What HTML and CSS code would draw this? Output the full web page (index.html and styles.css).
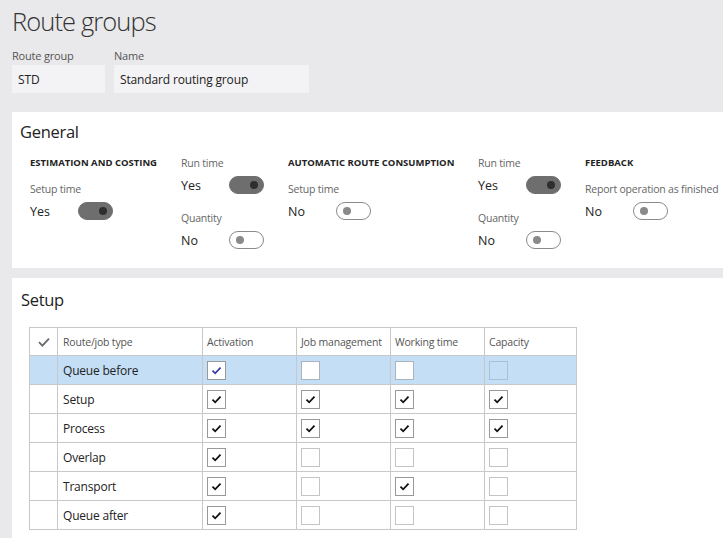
FILE: index.html
```html
<!DOCTYPE html>
<html lang="en">
<head>
<meta charset="utf-8">
<title>Route groups</title>
<link rel="stylesheet" href="styles.css">
</head>
<body>
<div class="page">
  <h1 class="title">Route groups</h1>
  <div class="ident">
    <div class="ifield">
      <div class="ilabel">Route group</div>
      <div class="input input-std">STD</div>
    </div>
    <div class="ifield">
      <div class="ilabel">Name</div>
      <div class="input input-name">Standard routing group</div>
    </div>
  </div>

  <section class="panel general">
    <h2 class="panel-title">General</h2>
    <div class="groups">
      <div class="grp grp-est">
        <div class="ghead">ESTIMATION AND COSTING</div>
        <div class="fld">
          <div class="flabel">Setup time</div>
          <div class="frow"><span class="fval">Yes</span><span class="toggle on"></span></div>
        </div>
      </div>
      <div class="grp grp-run">
        <div class="fld">
          <div class="flabel">Run time</div>
          <div class="frow"><span class="fval">Yes</span><span class="toggle on"></span></div>
        </div>
        <div class="fld">
          <div class="flabel">Quantity</div>
          <div class="frow"><span class="fval">No</span><span class="toggle"></span></div>
        </div>
      </div>
      <div class="grp grp-auto">
        <div class="ghead">AUTOMATIC ROUTE CONSUMPTION</div>
        <div class="fld">
          <div class="flabel">Setup time</div>
          <div class="frow"><span class="fval">No</span><span class="toggle"></span></div>
        </div>
      </div>
      <div class="grp grp-run">
        <div class="fld">
          <div class="flabel">Run time</div>
          <div class="frow"><span class="fval">Yes</span><span class="toggle on"></span></div>
        </div>
        <div class="fld">
          <div class="flabel">Quantity</div>
          <div class="frow"><span class="fval">No</span><span class="toggle"></span></div>
        </div>
      </div>
      <div class="grp grp-feed">
        <div class="ghead">FEEDBACK</div>
        <div class="fld">
          <div class="flabel">Report operation as finished</div>
          <div class="frow"><span class="fval">No</span><span class="toggle"></span></div>
        </div>
      </div>
    </div>
  </section>

  <section class="panel setup">
    <h2 class="panel-title">Setup</h2>
    <table class="grid">
      <colgroup>
        <col class="c-mark"><col class="c-type"><col class="c-flag"><col class="c-flag"><col class="c-flag"><col class="c-cap">
      </colgroup>
      <thead>
        <tr>
          <th class="markcell"><svg class="hmark" width="12" height="10" viewBox="0 0 12 10"><path d="M1 5.2 L4.4 8.6 L11 1.6" fill="none" stroke="#6a6a6a" stroke-width="1.8"/></svg></th>
          <th>Route/job type</th>
          <th>Activation</th>
          <th>Job management</th>
          <th>Working time</th>
          <th>Capacity</th>
        </tr>
      </thead>
      <tbody>
        <tr class="selected">
          <td></td><td class="tname">Queue before</td>
          <td><span class="cb on blue"><svg viewBox="0 0 19 19"><path d="M5 9.6 L8 12.6 L14 6.2"/></svg></span></td>
          <td><span class="cb sel-empty"></span></td>
          <td><span class="cb sel-empty"></span></td>
          <td><span class="cb disabled"></span></td>
        </tr>
        <tr>
          <td></td><td class="tname">Setup</td>
          <td><span class="cb on"><svg viewBox="0 0 19 19"><path d="M5 9.6 L8 12.6 L14 6.2"/></svg></span></td>
          <td><span class="cb on"><svg viewBox="0 0 19 19"><path d="M5 9.6 L8 12.6 L14 6.2"/></svg></span></td>
          <td><span class="cb on"><svg viewBox="0 0 19 19"><path d="M5 9.6 L8 12.6 L14 6.2"/></svg></span></td>
          <td><span class="cb on"><svg viewBox="0 0 19 19"><path d="M5 9.6 L8 12.6 L14 6.2"/></svg></span></td>
        </tr>
        <tr>
          <td></td><td class="tname">Process</td>
          <td><span class="cb on"><svg viewBox="0 0 19 19"><path d="M5 9.6 L8 12.6 L14 6.2"/></svg></span></td>
          <td><span class="cb on"><svg viewBox="0 0 19 19"><path d="M5 9.6 L8 12.6 L14 6.2"/></svg></span></td>
          <td><span class="cb on"><svg viewBox="0 0 19 19"><path d="M5 9.6 L8 12.6 L14 6.2"/></svg></span></td>
          <td><span class="cb on"><svg viewBox="0 0 19 19"><path d="M5 9.6 L8 12.6 L14 6.2"/></svg></span></td>
        </tr>
        <tr>
          <td></td><td class="tname">Overlap</td>
          <td><span class="cb on"><svg viewBox="0 0 19 19"><path d="M5 9.6 L8 12.6 L14 6.2"/></svg></span></td>
          <td><span class="cb"></span></td>
          <td><span class="cb"></span></td>
          <td><span class="cb"></span></td>
        </tr>
        <tr>
          <td></td><td class="tname">Transport</td>
          <td><span class="cb on"><svg viewBox="0 0 19 19"><path d="M5 9.6 L8 12.6 L14 6.2"/></svg></span></td>
          <td><span class="cb"></span></td>
          <td><span class="cb on"><svg viewBox="0 0 19 19"><path d="M5 9.6 L8 12.6 L14 6.2"/></svg></span></td>
          <td><span class="cb"></span></td>
        </tr>
        <tr>
          <td></td><td class="tname">Queue after</td>
          <td><span class="cb on"><svg viewBox="0 0 19 19"><path d="M5 9.6 L8 12.6 L14 6.2"/></svg></span></td>
          <td><span class="cb"></span></td>
          <td><span class="cb"></span></td>
          <td><span class="cb"></span></td>
        </tr>
      </tbody>
    </table>
  </section>
</div>
</body>
</html>
```

FILE: styles.css
```css
* { box-sizing: border-box; }

html, body {
  margin: 0;
  padding: 0;
  background: #e9e8ea;
  font-family: "Open Sans", "Noto Sans", "DejaVu Sans", sans-serif;
  color: #222;
  overflow: hidden;
}

.page {
  padding: 4px 0 0 12px;
  width: 723px;
  height: 538px;
  overflow: hidden;
}

.title {
  margin: 0;
  font-size: 25.5px;
  font-weight: 300;
  line-height: 34px;
  color: #333;
  letter-spacing: -0.9px;
}

.ident {
  display: flex;
  gap: 9px;
  margin-top: 10px;
}

.ilabel {
  font-size: 11px;
  line-height: 16px;
  color: #555;
  margin-bottom: 1px;
  letter-spacing: -0.2px;
}

.input {
  height: 28px;
  background: #f3f2f4;
  font-size: 12px;
  line-height: 30px;
  padding-left: 6px;
  color: #222;
  letter-spacing: -0.15px;
}

.input-std { width: 93px; }
.input-name { width: 195px; }

.panel {
  background: #fff;
  margin-top: 19px;
}

.general {
  height: 156px;
  padding: 8px 0 0 18px;
}

.panel-title {
  margin: 0 0 0 -10px;
  font-size: 16.5px;
  font-weight: 400;
  line-height: 24px;
  color: #222;
  letter-spacing: -0.3px;
}

.groups {
  display: flex;
  margin-top: 11px;
  gap: 23px;
}

.grp {
  display: flex;
  flex-direction: column;
  gap: 15px;
  flex: none;
}

.grp-est { width: 128px; }
.grp-run { width: 84px; }
.grp-auto { width: 167px; }
.grp-feed { width: 135px; }

.ghead {
  font-size: 9.5px;
  font-weight: 700;
  line-height: 16px;
  color: #222;
  white-space: nowrap;
  margin-bottom: -5px;
}

.flabel {
  font-size: 10.5px;
  line-height: 16px;
  color: #666;
  white-space: nowrap;
  letter-spacing: -0.2px;
}

.frow {
  display: flex;
  align-items: center;
  height: 20px;
  margin-top: 4px;
}

.fval {
  width: 48px;
  font-size: 12.5px;
  color: #222;
}

.toggle {
  position: relative;
  width: 35px;
  height: 18px;
  border-radius: 9px;
  border: 1.5px solid #8a8a8a;
  background: #fff;
  flex: none;
}

.toggle::after {
  content: "";
  position: absolute;
  top: 3.5px;
  left: 5.5px;
  width: 8px;
  height: 8px;
  border-radius: 50%;
  background: #8a8a8a;
}

.toggle.on {
  background: #6e6e6e;
  border-color: #6e6e6e;
}

.toggle.on::after {
  left: auto;
  right: 5.5px;
  background: #2e2e2e;
}

.setup {
  margin-top: 10px;
  height: 270px;
  padding: 10px 0 0 17px;
}

.setup .panel-title {
  margin-left: -8px;
}

.grid {
  margin-top: 15px;
  border-collapse: collapse;
  table-layout: fixed;
  width: 547px;
}

.c-mark { width: 28px; }
.c-type { width: 145px; }
.c-flag { width: 94px; }
.c-cap { width: 92px; }

.grid th, .grid td {
  border: 1px solid #c8c8c8;
  padding: 0 0 0 4px;
  text-align: left;
  vertical-align: middle;
}

.grid th {
  height: 28px;
  font-size: 10.5px;
  font-weight: 400;
  color: #555;
  white-space: nowrap;
  letter-spacing: -0.2px;
}

.grid td {
  height: 29px;
}

.grid .markcell {
  padding: 0;
  text-align: center;
}

.hmark { display: block; margin: 1px auto 0; }

.tname {
  font-size: 12px;
  color: #222;
  letter-spacing: -0.2px;
}

.grid th:nth-child(2), .grid .tname { padding-left: 5px; }

.selected td { background: #c4def5; }

.cb {
  display: block;
  width: 19px;
  height: 19px;
  border: 1px solid #c4c4c4;
  background: #fff;
}

.cb.on { border-color: #999; }
.cb.sel-empty { border-color: #a9b4be; }
.cb.disabled { background: transparent; border-color: #a9c1d6; }

.cb svg {
  display: block;
  width: 17px;
  height: 17px;
}

.cb svg path {
  fill: none;
  stroke: #111;
  stroke-width: 2;
}

.cb.blue svg path { stroke: #3c3ca6; }
```
